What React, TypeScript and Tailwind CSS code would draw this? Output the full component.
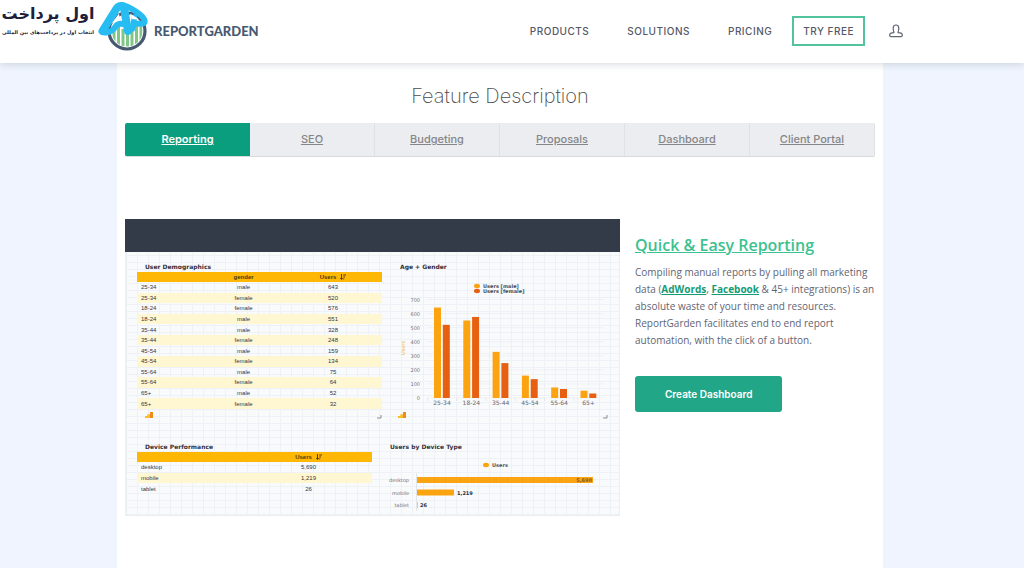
import React from "react";

const tabs = ["Reporting", "SEO", "Budgeting", "Proposals", "Dashboard", "Client Portal"];

const demographics: [string, string, string][] = [
  ["25-34", "male", "643"],
  ["25-34", "female", "520"],
  ["18-24", "female", "576"],
  ["18-24", "male", "551"],
  ["35-44", "male", "328"],
  ["35-44", "female", "248"],
  ["45-54", "male", "159"],
  ["45-54", "female", "134"],
  ["55-64", "male", "75"],
  ["55-64", "female", "64"],
  ["65+", "male", "52"],
  ["65+", "female", "32"],
];

const devices: [string, string][] = [
  ["desktop", "5,690"],
  ["mobile", "1,219"],
  ["tablet", "26"],
];

const ages: [string, number, number][] = [
  ["25-34", 643, 520],
  ["18-24", 551, 576],
  ["35-44", 328, 248],
  ["45-54", 159, 134],
  ["55-64", 75, 64],
  ["65+", 52, 32],
];

function Emblem() {
  return (
    <svg viewBox="0 0 54 52" className="h-[52px] w-[54px] shrink-0" aria-hidden="true">
      <circle cx="31" cy="31" r="18" fill="#fff" stroke="#475970" strokeWidth="3.200" />
      <clipPath id="disc">
        <circle cx="31" cy="31" r="15.500" />
      </clipPath>
      <g clipPath="url(#disc)" fill="#7fc687">
        <rect x="16.500" y="25" width="3" height="24" />
        <rect x="21" y="27" width="3" height="22" />
        <rect x="25.500" y="29" width="3" height="20" />
        <rect x="30" y="30" width="3" height="20" />
        <rect x="34.500" y="28" width="3" height="22" />
        <rect x="39" y="26" width="3" height="24" />
        <rect x="43.500" y="22" width="3" height="24" />
      </g>
      <g fill="none" stroke="#27bdf3" strokeLinecap="round" strokeLinejoin="round">
        <path d="M6.500 31 L19 11 Q22 5.500 25 6 Q28 6.500 28.500 11 L32 31" strokeWidth="8" />
        <path d="M7 32 Q15 34 20 26 Q22 23 28 24" strokeWidth="6" />
        <path d="M27 5 Q36 8 44 14.500 Q50 19.500 48.500 22.500 Q47 24.500 39 23.500" strokeWidth="6" />
        <path d="M38.500 17 L36.500 29" strokeWidth="5.500" />
      </g>
      <path d="M15.500 23.500 L23 13.500 L24 20.500 Q19 20.500 15.500 23.500 Z" fill="#fff" />
      <path d="M34 13.500 L42 18.500 L40.500 19.500 L36 19 Z" fill="#fff" />
    </svg>
  );
}

function UserIcon() {
  return (
    <svg viewBox="0 0 14 14" className="h-3.5 w-3.5" fill="none" stroke="#626675" strokeWidth="1.200" strokeLinejoin="round">
      <path d="M5 8.600 C4.600 6.800 4 5.200 4.200 3.600 C4.400 1.900 5.500 1 7 1 C8.500 1 9.600 1.900 9.800 3.600 C10 5.200 9.400 6.800 9 8.600 C11.500 8.600 13.300 9.200 13.300 11 C13.300 12.300 12.800 12.600 11.800 12.600 H2.200 C1.200 12.600 0.700 12.300 0.700 11 C0.700 9.200 2.500 8.600 5 8.600 Z" />
    </svg>
  );
}

function SortIcon() {
  return (
    <svg viewBox="0 0 6 6" className="ml-1 inline h-[6px] w-[6px] align-[-1px]" fill="none" stroke="#3a3218" strokeWidth="0.900" aria-hidden="true">
      <path d="M1.500 0 V5 M0.300 4 L1.500 5.500 L2.700 4 M3.200 1 H6 M3.200 3 H5 M3.200 5 H4.200" />
    </svg>
  );
}

function BarsMark() {
  return (
    <svg viewBox="0 0 8 6" className="h-1.5 w-2" aria-hidden="true">
      <path d="M0 4 H2.300 V6 H0 Z M2.300 2.200 H5 V6 H2.300 Z" fill="#fbbc2c" />
      <path d="M5 0 H8 V6 H5 Z" fill="#ef8a1d" />
    </svg>
  );
}

function WidgetFoot() {
  return (
    <div className="flex items-center justify-between pl-2">
      <BarsMark />
      <svg viewBox="0 0 5 4" className="mt-1 h-1 w-[5px]" aria-hidden="true">
        <path d="M0 3 H4 V0" fill="none" stroke="#8b8e94" />
      </svg>
    </div>
  );
}

const widgetTitle = "font-['DejaVu_Sans',sans-serif] text-[6px] leading-[10px] font-bold text-[#33303a]";
const tableText = "w-full border-collapse font-['Liberation_Sans',sans-serif] text-[6px] leading-[6px] text-[#35363c]";
const headRow = "h-2.5 bg-[#ffb706] text-[#4b3608]";
const bodyRow = "odd:bg-transparent even:bg-[#fff6d2]";

function AgeChart() {
  return (
    <svg
      viewBox="390 272 218 138"
      className="block w-full font-['DejaVu_Sans',sans-serif]"
      role="img"
      aria-label="Age + Gender"
    >
      <g fontSize="5" fontWeight="700" fill="#4c4d55">
        <ellipse cx="477" cy="286" rx="3" ry="2.200" fill="#fca311" />
        <ellipse cx="477" cy="291" rx="3" ry="2.200" fill="#e75f10" />
        <text x="483" y="288">Users [male]</text>
        <text x="483" y="293">Users [female]</text>
      </g>
      {[700, 600, 500, 400, 300, 200, 100, 0].map((v) => (
        <g key={v}>
          <path d={`M427 ${398 - v * 0.1407} H604`} stroke="#e6e8ec" strokeWidth="0.500" />
          <text x="420" y={400 - v * 0.1407} fontSize="5" textAnchor="end" fill="#717279">
            {v}
          </text>
        </g>
      ))}
      <text x="405" y="348" fontSize="5" textAnchor="middle" fill="#eeb14c" transform="rotate(-90 405 348)">
        Users
      </text>
      {ages.map(([label, male, female], i) => (
        <g key={label}>
          <rect x={434 + i * 29.3} y={398 - male * 0.1407} width="7" height={male * 0.1407} fill="#fca311" />
          <rect x={442.8 + i * 29.3} y={398 - female * 0.1407} width="7" height={female * 0.1407} fill="#e75f10" />
          <path d={`M${427.5 + i * 29.3} 398 v3`} stroke="#d6d8dd" strokeWidth="0.500" />
          <text x={442 + i * 29.3} y="405" fontSize="6" textAnchor="middle" fill="#66676e">
            {label}
          </text>
        </g>
      ))}
    </svg>
  );
}

function DeviceChart() {
  return (
    <svg
      viewBox="390 452 218 60"
      className="block w-full overflow-visible font-['DejaVu_Sans',sans-serif]"
      role="img"
      aria-label="Users by Device Type"
    >
      <ellipse cx="486" cy="465" rx="3" ry="2.200" fill="#fca311" />
      <text x="492" y="467" fontSize="5" fontWeight="700" fill="#56575f">Users</text>
      <path d="M416.500 473 V511" stroke="#dadce1" strokeWidth="0.700" />
      <rect x="417" y="477" width="176" height="6" fill="#fca311" />
      <rect x="417" y="489.500" width="37" height="6" fill="#fca311" />
      <rect x="417" y="502" width="1" height="6" fill="#f7c3a0" />
      <g fontSize="5" textAnchor="end" fill="#73747b">
        <text x="409" y="482">desktop</text>
        <text x="409" y="494.500">mobile</text>
        <text x="409" y="507">tablet</text>
      </g>
      <g fontSize="5" fontWeight="700" fill="#2f3036">
        <text x="592" y="482" textAnchor="end" fill="#80601f">5,690</text>
        <text x="457" y="494.500">1,219</text>
        <text x="420" y="507">26</text>
      </g>
    </svg>
  );
}

function ReportPreview() {
  return (
    <div className="border border-[#eceef1] bg-[#f9fafc] bg-[linear-gradient(to_right,#eef1f5_1px,transparent_1px),linear-gradient(to_bottom,#eef1f5_1px,transparent_1px)] bg-[size:11px_7px]">
      <div className="-mx-px -mt-px h-[33px] bg-[#333b48]" />
      <div className="grid grid-cols-[245fr_218fr] gap-x-2 px-[11px] pt-2.5">
        <section>
          <h3 className={`${widgetTitle} pl-2`}>User Demographics</h3>
          <table className={`${tableText} h-[137px] table-fixed`}>
            <thead>
              <tr className={headRow}>
                <th className="w-[27%] p-0" aria-label="age" />
                <th className="p-0 text-center">gender</th>
                <th className="w-[40%] p-0 text-center">
                  Users
                  <SortIcon />
                </th>
              </tr>
            </thead>
            <tbody>
              {demographics.map(([age, gender, users]) => (
                <tr key={age + gender} className={bodyRow}>
                  <td className="p-0 pl-1">{age}</td>
                  <td className="p-0 text-center">{gender}</td>
                  <td className="p-0 text-center">{users}</td>
                </tr>
              ))}
            </tbody>
          </table>
          <div className="pt-0.5">
            <WidgetFoot />
          </div>
        </section>
        <section>
          <h3 className={`${widgetTitle} pl-2.5`}>Age + Gender</h3>
          <AgeChart />
          <div className="pt-px">
            <WidgetFoot />
          </div>
        </section>
      </div>
      <div className="grid grid-cols-[245fr_218fr] gap-x-2 px-[11px] pt-[23px] pb-[3px]">
        <section className="pr-2.5">
          <h3 className={`${widgetTitle} pl-2`}>Device Performance</h3>
          <table className={`${tableText} h-[42px]`}>
            <thead>
              <tr className={headRow}>
                <th className="w-[46%] p-0" aria-label="device" />
                <th className="p-0 text-center">
                  Users
                  <SortIcon />
                </th>
              </tr>
            </thead>
            <tbody>
              {devices.map(([device, users]) => (
                <tr key={device} className={bodyRow}>
                  <td className="p-0 pl-1">{device}</td>
                  <td className="p-0 text-center">{users}</td>
                </tr>
              ))}
            </tbody>
          </table>
        </section>
        <section>
          <h3 className={widgetTitle}>Users by Device Type</h3>
          <DeviceChart />
        </section>
      </div>
    </div>
  );
}

export default function App() {
  return (
    <div className="min-h-screen bg-[#eff4fe] font-['Open_Sans',sans-serif]">
      <header className="relative flex h-[63px] items-center justify-between bg-white pr-[121px] pb-0.5 shadow-[0_1px_8px_rgba(50,60,80,0.2)]">
        <a href="#home" className="flex items-start self-start text-[#20203a]">
          <span dir="rtl" lang="fa" className="flex w-24 flex-col items-center pt-0.5 font-['DejaVu_Sans',sans-serif] whitespace-nowrap">
            <span className="text-[16px] leading-6 font-bold">اول پرداخت</span>
            <span className="text-[5px] leading-3 font-bold">انتخاب اول در پرداخت‌های بین المللی</span>
          </span>
          <Emblem />
          <span className="pt-[21px] pl-1 font-[Lato,sans-serif] text-[13px] leading-5 font-black text-[#475970]">
            REPORTGARDEN
          </span>
        </a>
        <nav className="flex items-center font-[Inter,sans-serif] text-[10px] leading-3 font-medium tracking-wider text-[#555868]">
          <a href="#products" className="mr-[38px]">PRODUCTS</a>
          <a href="#solutions" className="mr-[38px]">SOLUTIONS</a>
          <a href="#pricing" className="mr-5">PRICING</a>
          <a href="#try" className="mr-6 border-2 border-[#52c39c] px-[9px] py-[7px]">TRY FREE</a>
          <a href="#account" aria-label="Account">
            <UserIcon />
          </a>
        </nav>
      </header>

      <main className="pr-6">
        <div className="mx-auto min-h-[505px] max-w-[766px] bg-white px-2 pt-5">
          <h1 className="text-center font-[Inter,sans-serif] text-[20px] leading-[26px] font-extralight text-[#4c4c4c]">
            Feature Description
          </h1>
          <div
            role="tablist"
            className="mt-3.5 grid h-[34px] grid-cols-6 overflow-hidden rounded-[2px] border-b border-[#d9dadc] bg-[#ecedf0] font-[Inter,sans-serif] text-[11px] font-medium text-[#858688]"
          >
            {tabs.map((tab, i) => (
              <button
                key={tab}
                type="button"
                role="tab"
                aria-selected={i === 0}
                className={
                  i === 0
                    ? "bg-[#0a9d7e] font-semibold text-white underline"
                    : "border-r border-[#e0e1e4] underline"
                }
              >
                {tab}
              </button>
            ))}
          </div>

          <div className="mt-[62px] grid grid-cols-[495fr_240fr] gap-x-[15px]">
            <ReportPreview />
            <section className="pt-3.5">
              <h2 className="text-base leading-6 font-semibold whitespace-nowrap">
                <a href="#reporting" className="text-[#3cc191] underline">Quick &amp; Easy Reporting</a>
              </h2>
              <p className="mt-[7px] text-[10px] leading-[17px] text-[#5f6475]">
                Compiling manual reports by pulling all marketing data (
                <a href="#adwords" className="font-bold text-[#159b77] underline">AdWords</a>,{" "}
                <a href="#facebook" className="font-bold text-[#159b77] underline">Facebook</a> &amp; 45+ integrations) is an
                absolute waste of your time and resources. ReportGarden facilitates end to end report automation, with the
                click of a button.
              </p>
              <button
                type="button"
                className="mt-[27px] h-9 rounded-[3px] bg-[#22a688] px-[30px] font-[Inter,sans-serif] text-[10px] font-semibold text-white"
              >
                Create Dashboard
              </button>
            </section>
          </div>
        </div>
      </main>
    </div>
  );
}
